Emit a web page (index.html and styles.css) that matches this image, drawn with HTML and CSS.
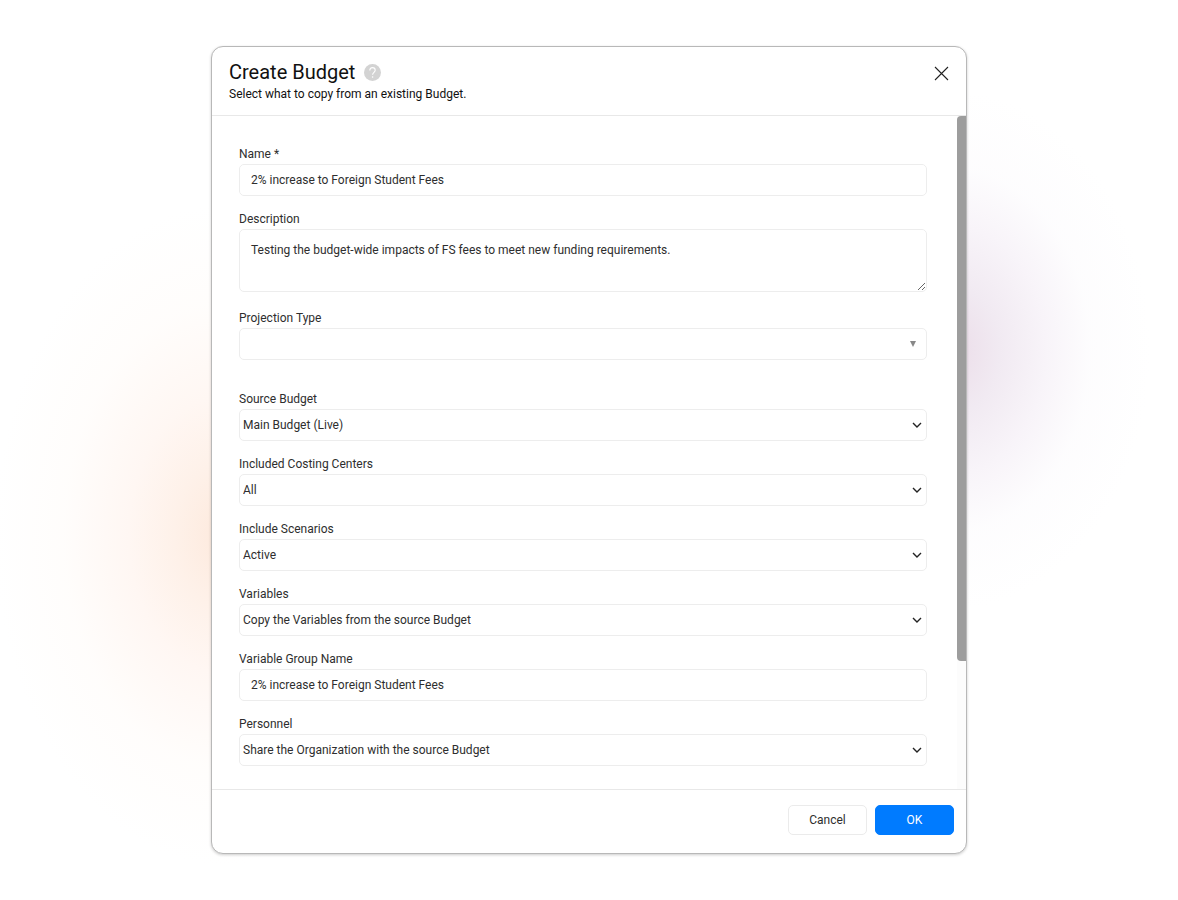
FILE: index.html
```
<!DOCTYPE html>
<html lang="en">
<head>
  <meta charset="utf-8">
  <title>Create Budget</title>
  <link rel="stylesheet" href="styles.css">
</head>
<body>
<form class="modal" role="dialog" aria-labelledby="modal-title">
  <header class="modal-header">
    <div>
      <h1 id="modal-title">Create Budget
        <button type="button" class="help" aria-label="Help">
          <svg width="17" height="17" viewBox="0 0 17 17"><circle cx="8.5" cy="8.5" r="8.5" fill="#d3d3d3"/><path d="M5.8 6.6C5.8 4.6 7 3.6 8.5 3.6s2.7 1 2.7 2.6c0 2.1-2.6 2.2-2.6 4.6" fill="none" stroke="#fff" stroke-width="1.1"/><circle cx="8.6" cy="13" r=".8" fill="#fff"/></svg>
        </button>
      </h1>
      <p>Select what to copy from an existing Budget.</p>
    </div>
    <button type="button" class="close" aria-label="Close">
      <svg width="15" height="15" viewBox="0 0 15 15"><path d="M1 1l13 13M14 1L1 14" fill="none" stroke="#222" stroke-width="1.1"/></svg>
    </button>
  </header>

  <div class="modal-main">
    <div class="modal-body">
      <div class="field">
        <label for="name">Name *</label>
        <input type="text" id="name" value="2% increase to Foreign Student Fees">
      </div>
      <div class="field">
        <label for="description">Description</label>
        <textarea id="description">Testing the budget-wide impacts of FS fees to meet new funding requirements.</textarea>
      </div>
      <div class="field section-end">
        <label for="projection">Projection Type</label>
        <select id="projection" class="combo"><option></option></select>
      </div>

      <div class="field">
        <label for="source">Source Budget</label>
        <select id="source"><option>Main Budget (Live)</option></select>
      </div>
      <div class="field">
        <label for="centers">Included Costing Centers</label>
        <select id="centers"><option>All</option></select>
      </div>
      <div class="field">
        <label for="scenarios">Include Scenarios</label>
        <select id="scenarios"><option>Active</option></select>
      </div>
      <div class="field">
        <label for="variables">Variables</label>
        <select id="variables"><option>Copy the Variables from the source Budget</option></select>
      </div>
      <div class="field">
        <label for="group">Variable Group Name</label>
        <input type="text" id="group" value="2% increase to Foreign Student Fees">
      </div>
      <div class="field">
        <label for="personnel">Personnel</label>
        <select id="personnel"><option>Share the Organization with the source Budget</option></select>
      </div>
    </div>
    <div class="scrollbar"><div class="thumb"></div></div>
  </div>

  <footer class="modal-footer">
    <button type="button" class="btn">Cancel</button>
    <button type="submit" class="btn btn-primary">OK</button>
  </footer>
</form>
</body>
</html>
```
FILE: styles.css
```
* { box-sizing: border-box; }

body {
    margin: 0;
    height: 100vh;
    padding: 46px 20px;
    display: flex;
    justify-content: center;
    font: 12px/20px Roboto, sans-serif;
    color: #2e2e2e;
    /* soft glows behind the dialog */
    background:
        radial-gradient(ellipse 200px 260px at 950px 350px, #ebdce8, #f1eaf2 25%, #f8f4f9 48%, rgba(252, 251, 253, 0.6) 70%, rgba(255, 255, 255, 0)),
        radial-gradient(ellipse 230px 330px at 225px 535px, #fde9dc, #fef1e9 22%, #fff7f3 42%, rgba(255, 252, 250, 0.7) 70%, rgba(255, 255, 255, 0)),
        #fff;
}

button, input, select, textarea {
    font: inherit;
    color: inherit;
}

.modal {
    display: flex;
    flex-direction: column;
    width: 100%;
    max-width: 756px;
    background: #fff;
    border: 1px solid #b8b8b8;
    border-radius: 12px;
    box-shadow: 0 1px 3px rgba(0, 0, 0, 0.2);
    overflow: hidden;
}

.modal-header {
    display: flex;
    justify-content: space-between;
    align-items: flex-start;
    padding: 12px 17px 12px;
    border-bottom: 1px solid #e8e8e8;
}
.modal-header h1 {
    display: flex;
    align-items: center;
    gap: 9px;
    margin: 0;
    font-size: 20px;
    line-height: 26px;
    font-weight: 400;
    color: #111;
}
.modal-header p {
    margin: 0;
    line-height: 18px;
    color: #111;
}
.help, .close {
    display: flex;
    padding: 0;
    border: 0;
    background: none;
    cursor: pointer;
}
.close { margin-top: 7px; }

.modal-main {
    display: flex;
    flex: 1;
    min-height: 0;
}
.modal-body {
    flex: 1;
    overflow-y: auto;
    padding: 28px 30px 56px 27px;
    scrollbar-width: none;
}
.scrollbar {
    width: 9px;
    background: #fcfcfc;
}
.thumb {
    height: 81%;
    background: #9d9d9d;
    border-radius: 4px 0 0 4px;
}

.field { margin-bottom: 13px; }
.section-end { margin-bottom: 29px; }
.field label { display: block; }
.field input, .field select, .field textarea {
    display: block;
    width: 100%;
    height: 32px;
    border: 1px solid #ededed;
    border-radius: 5px;
    background: #fff;
}
.field input { padding: 0 11px; }
.field textarea {
    height: 63px;
    margin-bottom: 16px;
    padding: 10px 11px;
    resize: vertical;
}
.field select {
    appearance: none;
    padding: 0 3px;
    background: #fff url("data:image/svg+xml,%3Csvg xmlns='http://www.w3.org/2000/svg' width='10' height='7'%3E%3Cpath d='M1 1l4 4 4-4' fill='none' stroke='%23222' stroke-width='1.4'/%3E%3C/svg%3E") no-repeat right 4px center;
}
.field .combo {
    background: #fff url("data:image/svg+xml,%3Csvg xmlns='http://www.w3.org/2000/svg' width='6' height='6'%3E%3Cpath d='M0 0h6L3 6z' fill='%23888'/%3E%3C/svg%3E") no-repeat right 10px center;
}

.modal-footer {
    display: flex;
    justify-content: flex-end;
    gap: 8px;
    padding: 15px 12px 18px;
    border-top: 1px solid #e8e8e8;
}
.btn {
    width: 79px;
    height: 30px;
    border: 1px solid #ebebeb;
    border-radius: 5px;
    background: #fff;
}
.btn-primary {
    border-color: #007bff;
    background: #007bff;
    color: #fff;
}
```
